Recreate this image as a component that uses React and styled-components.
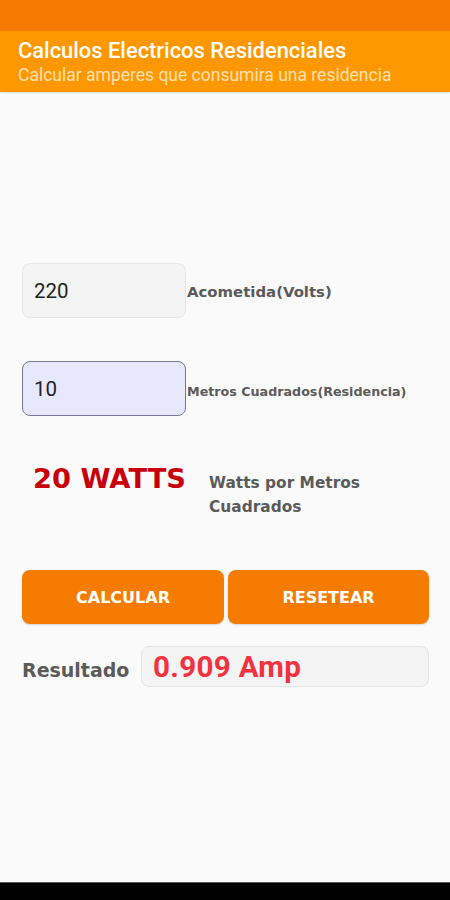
import React from "react";
import styled, { createGlobalStyle } from "styled-components";

const Global = createGlobalStyle`
  html, body { margin: 0; padding: 0; background: #fafafa; }
  * { box-sizing: border-box; }
`;

const wide = `"DejaVu Sans", "Open Sans", sans-serif`;

const Screen = styled.div`
  width: 450px;
  height: 900px;
  display: flex;
  flex-direction: column;
  background: #fafafa;
  font-family: Roboto, "Liberation Sans", sans-serif;
`;

const StatusBar = styled.div`
  height: 31px;
  background: #f57c00;
`;

const AppBar = styled.header`
  height: 61px;
  background: #ff9800;
  padding: 6px 0 0 18px;
  box-shadow: 0 1px 2px rgba(0, 0, 0, 0.12);
`;

const Title = styled.h1`
  margin: 0;
  font-size: 21.9px;
  font-weight: 500;
  color: #fff;
  line-height: 27px;
`;

const Subtitle = styled.p`
  margin: 0;
  font-size: 17.5px;
  color: #ffe0b2;
  line-height: 22px;
`;

const Content = styled.main`
  flex: 1;
  padding: 171px 21px 0 22px;
  display: flex;
  flex-direction: column;
`;

const FieldRow = styled.div`
  display: flex;
  align-items: center;
  margin-bottom: ${(p) => p.$gap || 0}px;
`;

const Input = styled.div`
  width: 164px;
  height: 55px;
  border-radius: 8px;
  padding-left: 11px;
  display: flex;
  align-items: center;
  font-size: 20.5px;
  color: #222;
  background: ${(p) => (p.$focused ? "#e8e8fd" : "#f4f4f4")};
  border: ${(p) => (p.$focused ? "1.5px solid #767695" : "1px solid #e6e6e6")};
`;

const Label = styled.span`
  font-family: ${wide};
  font-weight: 700;
  color: #5a5a5a;
  font-size: ${(p) => p.$size}px;
  margin-left: 1px;
  padding-top: ${(p) => p.$drop || 0}px;
`;

const WattsRow = styled.div`
  display: flex;
  align-items: flex-start;
  margin-top: 47px;
  padding-left: 11px;
`;

const Watts = styled.div`
  font-family: ${wide};
  font-weight: 700;
  font-size: 27.3px;
  color: #c8000a;
  line-height: 32px;
  width: 176px;
`;

const WattsLabel = styled.div`
  font-family: ${wide};
  font-weight: 700;
  font-size: 15.4px;
  color: #5a5a5a;
  line-height: 24px;
  margin-top: 8px;
`;

const Buttons = styled.div`
  display: grid;
  grid-template-columns: 202px 201px;
  gap: 4px;
  margin-top: 51px;
`;

const Button = styled.button`
  height: 54px;
  border: none;
  border-radius: 8px;
  background: #f57c00;
  color: #fff;
  font-family: ${wide};
  font-weight: 700;
  font-size: 16px;
  box-shadow: 0 1px 2px rgba(0, 0, 0, 0.15);
`;

const ResultRow = styled.div`
  display: flex;
  align-items: center;
  margin-top: 22px;
`;

const ResultLabel = styled.span`
  font-family: ${wide};
  font-weight: 700;
  font-size: 19px;
  color: #5a5a5a;
  width: 119px;
  padding-top: 6px;
`;

const ResultBox = styled.div`
  flex: 1;
  height: 41px;
  border-radius: 8px;
  border: 1px solid #e2e2e2;
  background: #f4f4f4;
  padding-left: 11px;
  display: flex;
  align-items: center;
  font-size: 29.6px;
  font-weight: 700;
  color: #f2323f;
  letter-spacing: 0.3px;
`;

const NavBar = styled.div`
  height: 18px;
  background: #000;
  border-top: 1px solid #555;
`;

export default function App() {
  return (
    <Screen>
      <Global />
      <StatusBar />
      <AppBar>
        <Title>Calculos Electricos Residenciales</Title>
        <Subtitle>Calcular amperes que consumira una residencia</Subtitle>
      </AppBar>
      <Content>
        <FieldRow $gap={43}>
          <Input>220</Input>
          <Label $size={14.9} $drop={3}>Acometida(Volts)</Label>
        </FieldRow>
        <FieldRow>
          <Input $focused>10</Input>
          <Label $size={12.7} $drop={6}>Metros Cuadrados(Residencia)</Label>
        </FieldRow>
        <WattsRow>
          <Watts>20 WATTS</Watts>
          <WattsLabel>
            Watts por Metros
            <br />
            Cuadrados
          </WattsLabel>
        </WattsRow>
        <Buttons>
          <Button>CALCULAR</Button>
          <Button>RESETEAR</Button>
        </Buttons>
        <ResultRow>
          <ResultLabel>Resultado</ResultLabel>
          <ResultBox>0.909 Amp</ResultBox>
        </ResultRow>
      </Content>
      <NavBar />
    </Screen>
  );
}
